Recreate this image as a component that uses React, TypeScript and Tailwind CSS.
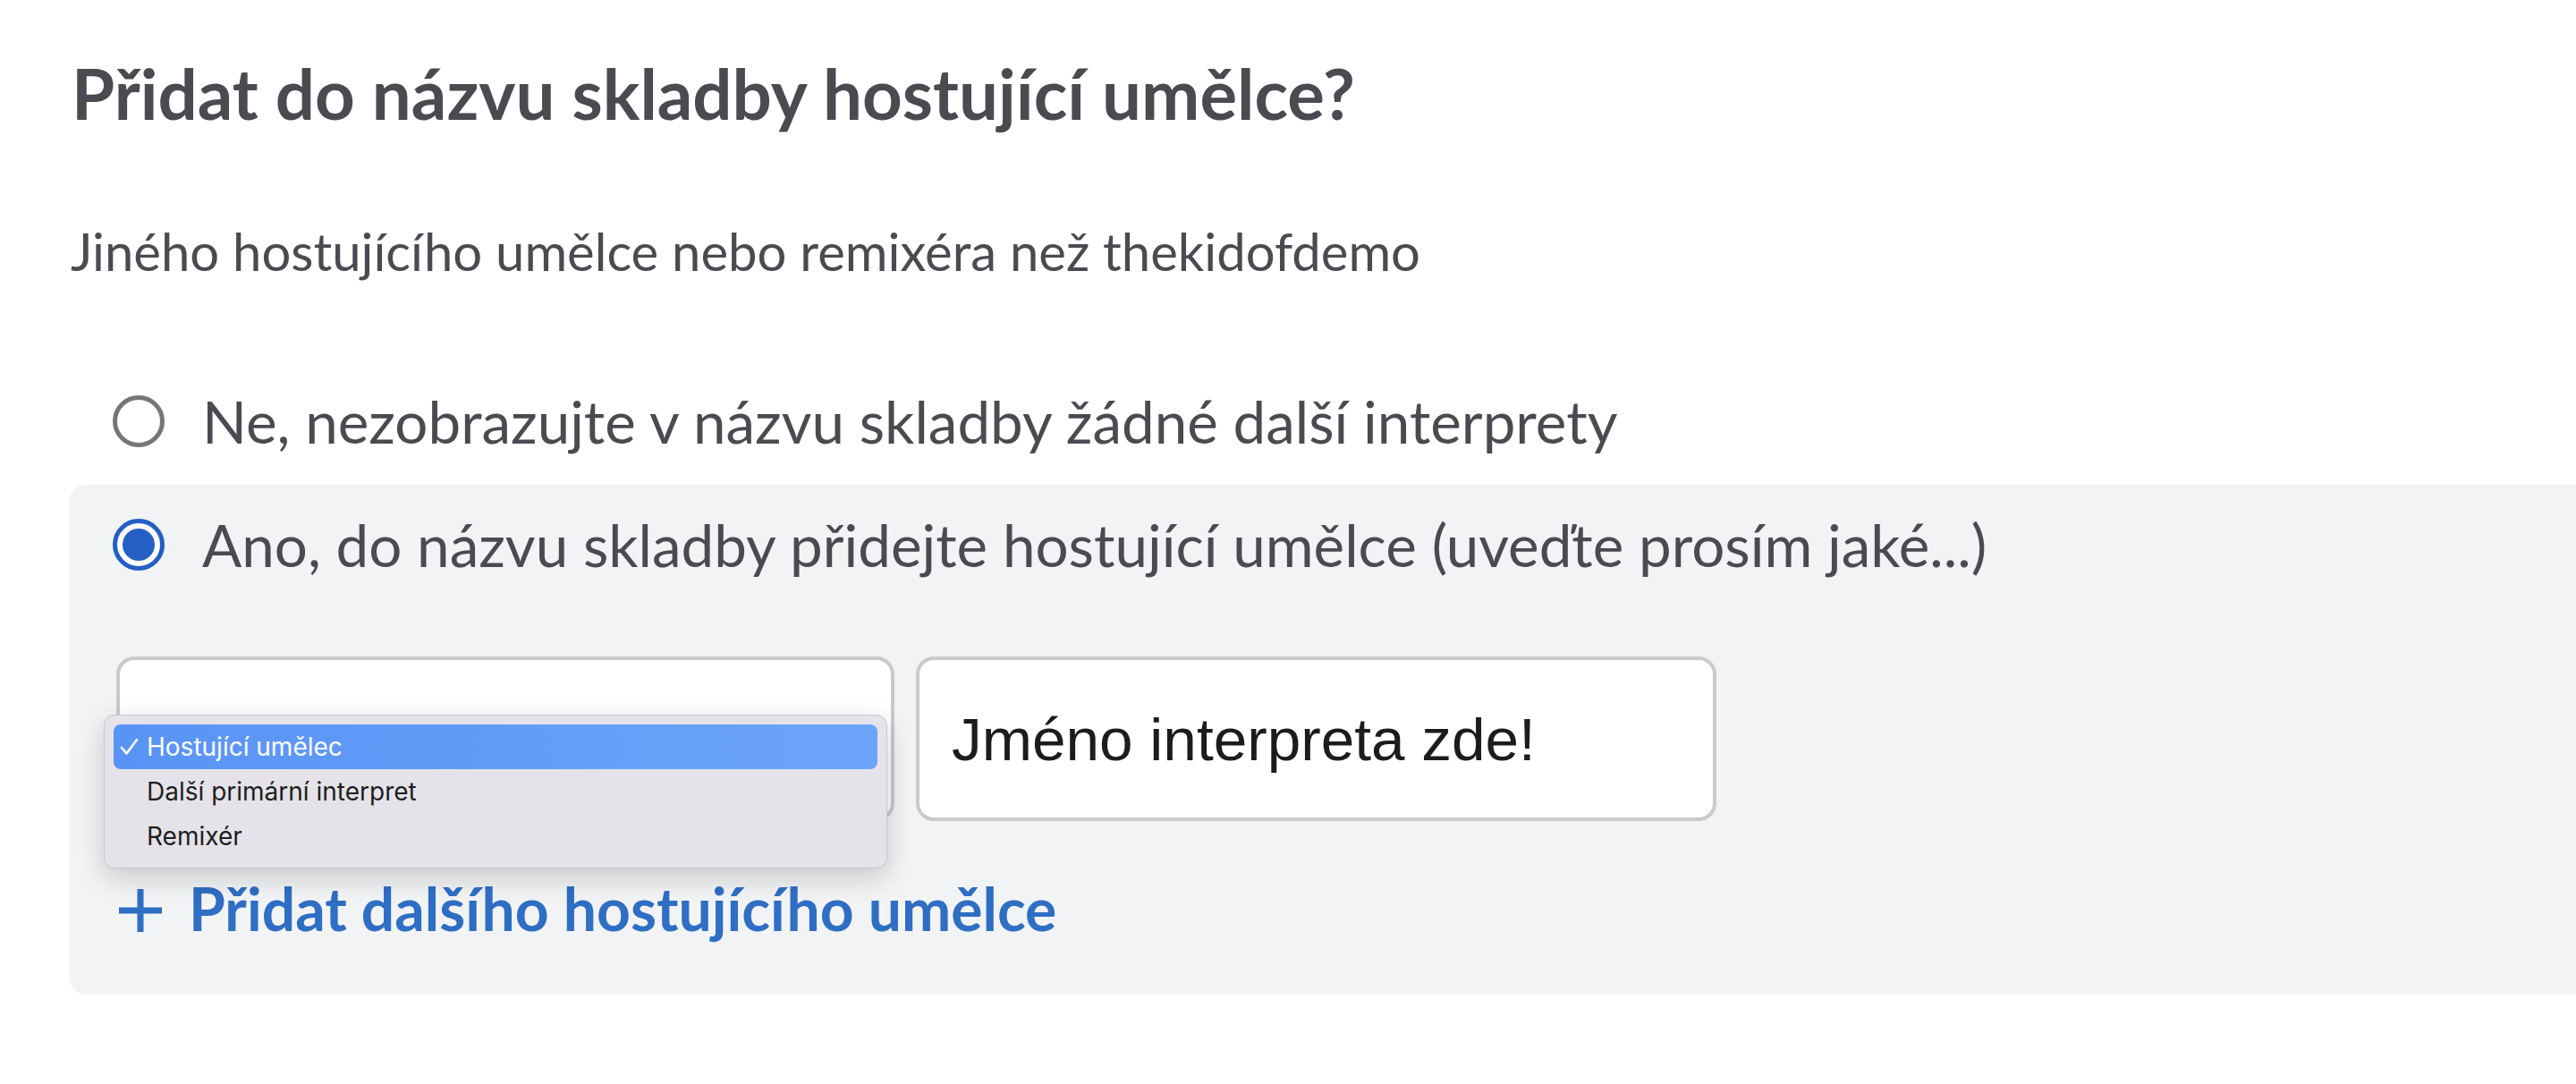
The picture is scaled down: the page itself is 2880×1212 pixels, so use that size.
import { useState } from 'react';

const options = ['Hostující umělec', 'Další primární interpret', 'Remixér'];

function Radio({ checked }: { checked: boolean }) {
  // native-looking radio, drawn at 2x
  if (!checked) {
    return <div className="w-[58px] h-[58px] shrink-0 rounded-full border-[5px] border-[#767676] bg-white" />;
  }
  return (
    <div className="w-[58px] h-[58px] shrink-0 rounded-full border-[5px] border-[#245fc5] bg-white flex items-center justify-center">
      <div className="w-[36px] h-[36px] rounded-full bg-[#245fc5]" />
    </div>
  );
}

function RoleMenu({ selected }: { selected: number }) {
  return (
    <div className="absolute left-[-18px] top-[61px] w-[876px] rounded-[12px] border border-[#c9c7cd] bg-[#e5e3e9] p-[10px] shadow-[0_10px_30px_rgba(0,0,0,0.18)] font-['Inter',sans-serif] text-[28px]">
      {options.map((opt, i) => (
        <div
          key={opt}
          className={
            i === selected
              ? 'h-[50px] flex items-center rounded-[8px] bg-gradient-to-r from-[#5993f6] to-[#6ca5f8] text-white'
              : 'h-[50px] flex items-center text-[#1e1e1e]'
          }
        >
          <div className="w-[37px] pl-[7px] flex items-center">
            {i === selected && (
              <svg width="21" height="20" viewBox="0 0 21 20" fill="none">
                <path d="M2 11 L7.5 17.5 L19 2" stroke="white" strokeWidth="2.6" strokeLinecap="round" strokeLinejoin="round" />
              </svg>
            )}
          </div>
          <span>{opt}</span>
        </div>
      ))}
    </div>
  );
}

export default function App() {
  const [artist, setArtist] = useState('Jméno interpreta zde!');

  return (
    <main className="w-full h-[1212px] bg-white pl-[77px] pt-[56px] overflow-hidden font-['Lato',sans-serif] text-[#4a4b51]">
      {/* Heading */}
      <h2 className="pl-[3px] text-[78px] leading-[96px] font-bold">Přidat do názvu skladby hostující umělce?</h2>
      <p className="mt-[95px] pl-[2px] text-[58px] leading-[67px]">
        Jiného hostujícího umělce nebo remixéra než thekidofdemo
      </p>

      {/* Option: no */}
      <div className="mt-[118px] pl-[49px] flex items-center gap-[42px]">
        <Radio checked={false} />
        <span className="text-[65.5px] leading-[77px]">Ne, nezobrazujte v názvu skladby žádné další interprety</span>
      </div>

      {/* Option: yes (expanded) */}
      <div className="mt-[33px] bg-[#f2f3f5] rounded-l-[20px] pt-[28px] pb-[58px]">
        <div className="pl-[49px] flex items-center gap-[42px]">
          <Radio checked={true} />
          <span className="text-[65.5px] leading-[77px]">
            Ano, do názvu skladby přidejte hostující umělce (uveďte prosím jaké...)
          </span>
        </div>

        <div className="mt-[87px] pl-[53px] flex gap-[24px]">
          <div className="relative w-[870px] h-[184px] rounded-[20px] border-[4px] border-[#cacaca] bg-white">
            <RoleMenu selected={0} />
          </div>
          <input
            value={artist}
            onChange={(e) => setArtist(e.target.value)}
            className="w-[895px] h-[184px] rounded-[20px] border-[4px] border-[#cacaca] bg-white pl-[36px] font-['Liberation_Sans',Arial,sans-serif] text-[67.5px] text-[#1c1c1c] outline-none"
          />
        </div>

        <div className="mt-[59px] pl-[54px] flex items-center gap-[28px] text-[#2e6ec4]">
          <svg width="52" height="52" viewBox="0 0 52 52" className="mt-[4px]">
            <path d="M26 2 V50 M2 26 H50" stroke="#2e6ec4" strokeWidth="7" />
          </svg>
          <span className="text-[66px] leading-[77px] font-bold">Přidat dalšího hostujícího umělce</span>
        </div>
      </div>
    </main>
  );
}
